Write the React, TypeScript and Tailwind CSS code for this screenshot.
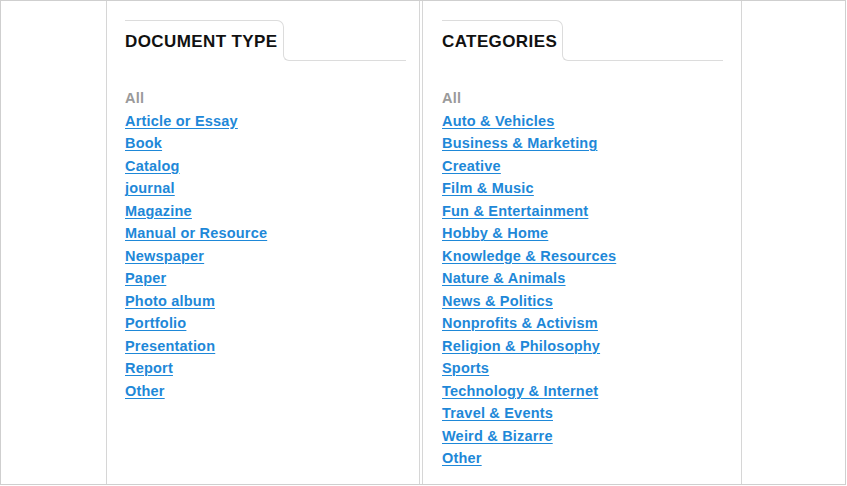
import React from "react";

const documentTypes = [
  "Article or Essay",
  "Book",
  "Catalog",
  "journal",
  "Magazine",
  "Manual or Resource",
  "Newspaper",
  "Paper",
  "Photo album",
  "Portfolio",
  "Presentation",
  "Report",
  "Other",
];

const categories = [
  "Auto & Vehicles",
  "Business & Marketing",
  "Creative",
  "Film & Music",
  "Fun & Entertainment",
  "Hobby & Home",
  "Knowledge & Resources",
  "Nature & Animals",
  "News & Politics",
  "Nonprofits & Activism",
  "Religion & Philosophy",
  "Sports",
  "Technology & Internet",
  "Travel & Events",
  "Weird & Bizarre",
  "Other",
];

const FilterPanel = ({
  title,
  items,
  className,
}: {
  title: string;
  items: string[];
  className: string;
}) => {
  return (
    <div className={`flex flex-col border-x border-[#d6d6d6] ${className}`}>
      <div className="flex items-start pt-[19px]">
        <div className="h-[35px] border-t border-r border-[#dcdcdc] rounded-tr-[7px] pt-[11px] pr-[5px]">
          <h2 className="text-[17px] leading-[20px] font-bold text-[#111] tracking-[0.4px]">
            {title}
          </h2>
        </div>
        <div className="flex-1 mt-[35px] h-[6px] -ml-px border-l border-b border-[#dcdcdc] rounded-bl-[6px]" />
      </div>
      <ul className="mt-[26px] text-[14.5px] leading-[22.5px] font-bold tracking-[0.2px]">
        <li className="text-[#9a9a9a]">All</li>
        {items.map((item) => (
          <li key={item}>
            <a
              href="#"
              className="text-[#1e88d8] underline underline-offset-[2px] decoration-1"
            >
              {item}
            </a>
          </li>
        ))}
      </ul>
    </div>
  );
};

export default function App() {
  return (
    <div
      className="w-[847px] h-[486px] bg-white overflow-hidden"
      style={{ fontFamily: '"Liberation Sans", Arial, sans-serif' }}
    >
      <div className="w-[846px] h-[485px] border border-[#cfcfcf] flex">
        <div className="w-[105px]" />
        <FilterPanel
          title="DOCUMENT TYPE"
          items={documentTypes}
          className="w-[314px] pl-[18px] pr-[13px]"
        />
        <div className="w-[2px]" />
        <FilterPanel
          title="CATEGORIES"
          items={categories}
          className="w-[320px] pl-[19px] pr-[18px]"
        />
      </div>
    </div>
  );
}
